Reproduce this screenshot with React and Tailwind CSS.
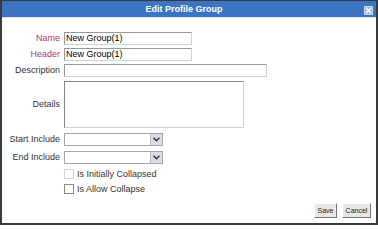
import React from 'react';

const font = { fontFamily: '"Liberation Sans", Arial, sans-serif' };

const Chevron = () => (
  <svg width="7" height="5" viewBox="0 0 7 5">
    <path d="M0.5 0.8 L3.5 3.8 L6.5 0.8" fill="none" stroke="#333" strokeWidth="1.4" />
  </svg>
);

const Select = () => (
  <div className="flex h-[13px] w-[99px] border border-[#a5a5a5] bg-white">
    <div className="flex-1" />
    <div className="flex w-[12px] items-center justify-center border-l border-[#b8b8c8] bg-[#dcdce6]">
      <Chevron />
    </div>
  </div>
);

const Label = ({ children, accent }) => (
  <span className={`text-right text-[9px] leading-none ${accent ? 'text-[#a83a62]' : 'text-[#333333]'}`}>
    {children}
  </span>
);

const TextBox = ({ value, width }) => (
  <div
    className={`flex h-[13px] items-center border border-t-[#999] border-l-[#999] border-r-[#d0d0d0] border-b-[#d0d0d0] bg-white px-[1px] text-[9px] leading-none text-black ${width}`}
  >
    {value}
  </div>
);

const Check = ({ faint, label }) => (
  <div className="flex items-center gap-[3px]">
    <div className={`h-[10px] w-[10px] border bg-white ${faint ? 'border-[#d0d0d0]' : 'border-[#8a8a8a]'}`} />
    <span className="text-[9px] leading-none text-[#333333]">{label}</span>
  </div>
);

const Btn = ({ children, width }) => (
  <button
    className={`flex h-[15px] items-center justify-center border border-t-white border-l-white border-r-[#777] border-b-[#777] bg-[#e8e8e8] text-[7px] leading-none text-[#222] ${width}`}
  >
    {children}
  </button>
);

export default function App() {
  return (
    <div style={font} className="flex h-[225px] w-[378px] flex-col border-x-2 border-b-2 border-t border-[#3a3a3a] bg-white">
      <div className="relative flex h-[16px] items-center justify-center bg-[#3c74c4] pr-[10px]">
        <span className="text-[9px] font-bold leading-none text-white">Edit Profile Group</span>
        <div className="absolute right-[3px] top-[5px] flex h-[9px] w-[9px] items-center justify-center border border-[#c8d8f0] bg-[#9ab8e4]">
          <svg width="7" height="7" viewBox="0 0 7 7">
            <path d="M1 1 L6 6 M6 1 L1 6" stroke="#ffffff" strokeWidth="1.3" />
          </svg>
        </div>
      </div>
      <div className="h-[1px] bg-[#dde3ec]" />

      <div className="grid grid-cols-[58px_1fr] items-center gap-x-[4px] pt-[14px]">
        <Label accent>Name</Label>
        <TextBox value="New Group(1)" width="w-[128px]" />

        <div className="col-span-2 h-[3px]" />
        <Label accent>Header</Label>
        <TextBox value="New Group(1)" width="w-[128px]" />

        <div className="col-span-2 h-[3px]" />
        <Label>Description</Label>
        <TextBox value="" width="w-[203px]" />

        <div className="col-span-2 h-[4px]" />
        <Label>Details</Label>
        <div className="h-[47px] w-[180px] border border-t-[#888] border-l-[#888] border-r-[#d0d0d0] border-b-[#d0d0d0] bg-white" />

        <div className="col-span-2 h-[5px]" />
        <Label>Start Include</Label>
        <Select />

        <div className="col-span-2 h-[5px]" />
        <Label>End Include</Label>
        <Select />

        <div className="col-span-2 h-[5px]" />
        <span />
        <Check faint label="Is Initially Collapsed" />

        <div className="col-span-2 h-[5px]" />
        <span />
        <Check label="Is Allow Collapse" />
      </div>

      <div className="mt-[9px] flex justify-end gap-[5px] pr-[5px]">
        <Btn width="w-[23px]">Save</Btn>
        <Btn width="w-[29px]">Cancel</Btn>
      </div>
    </div>
  );
}
